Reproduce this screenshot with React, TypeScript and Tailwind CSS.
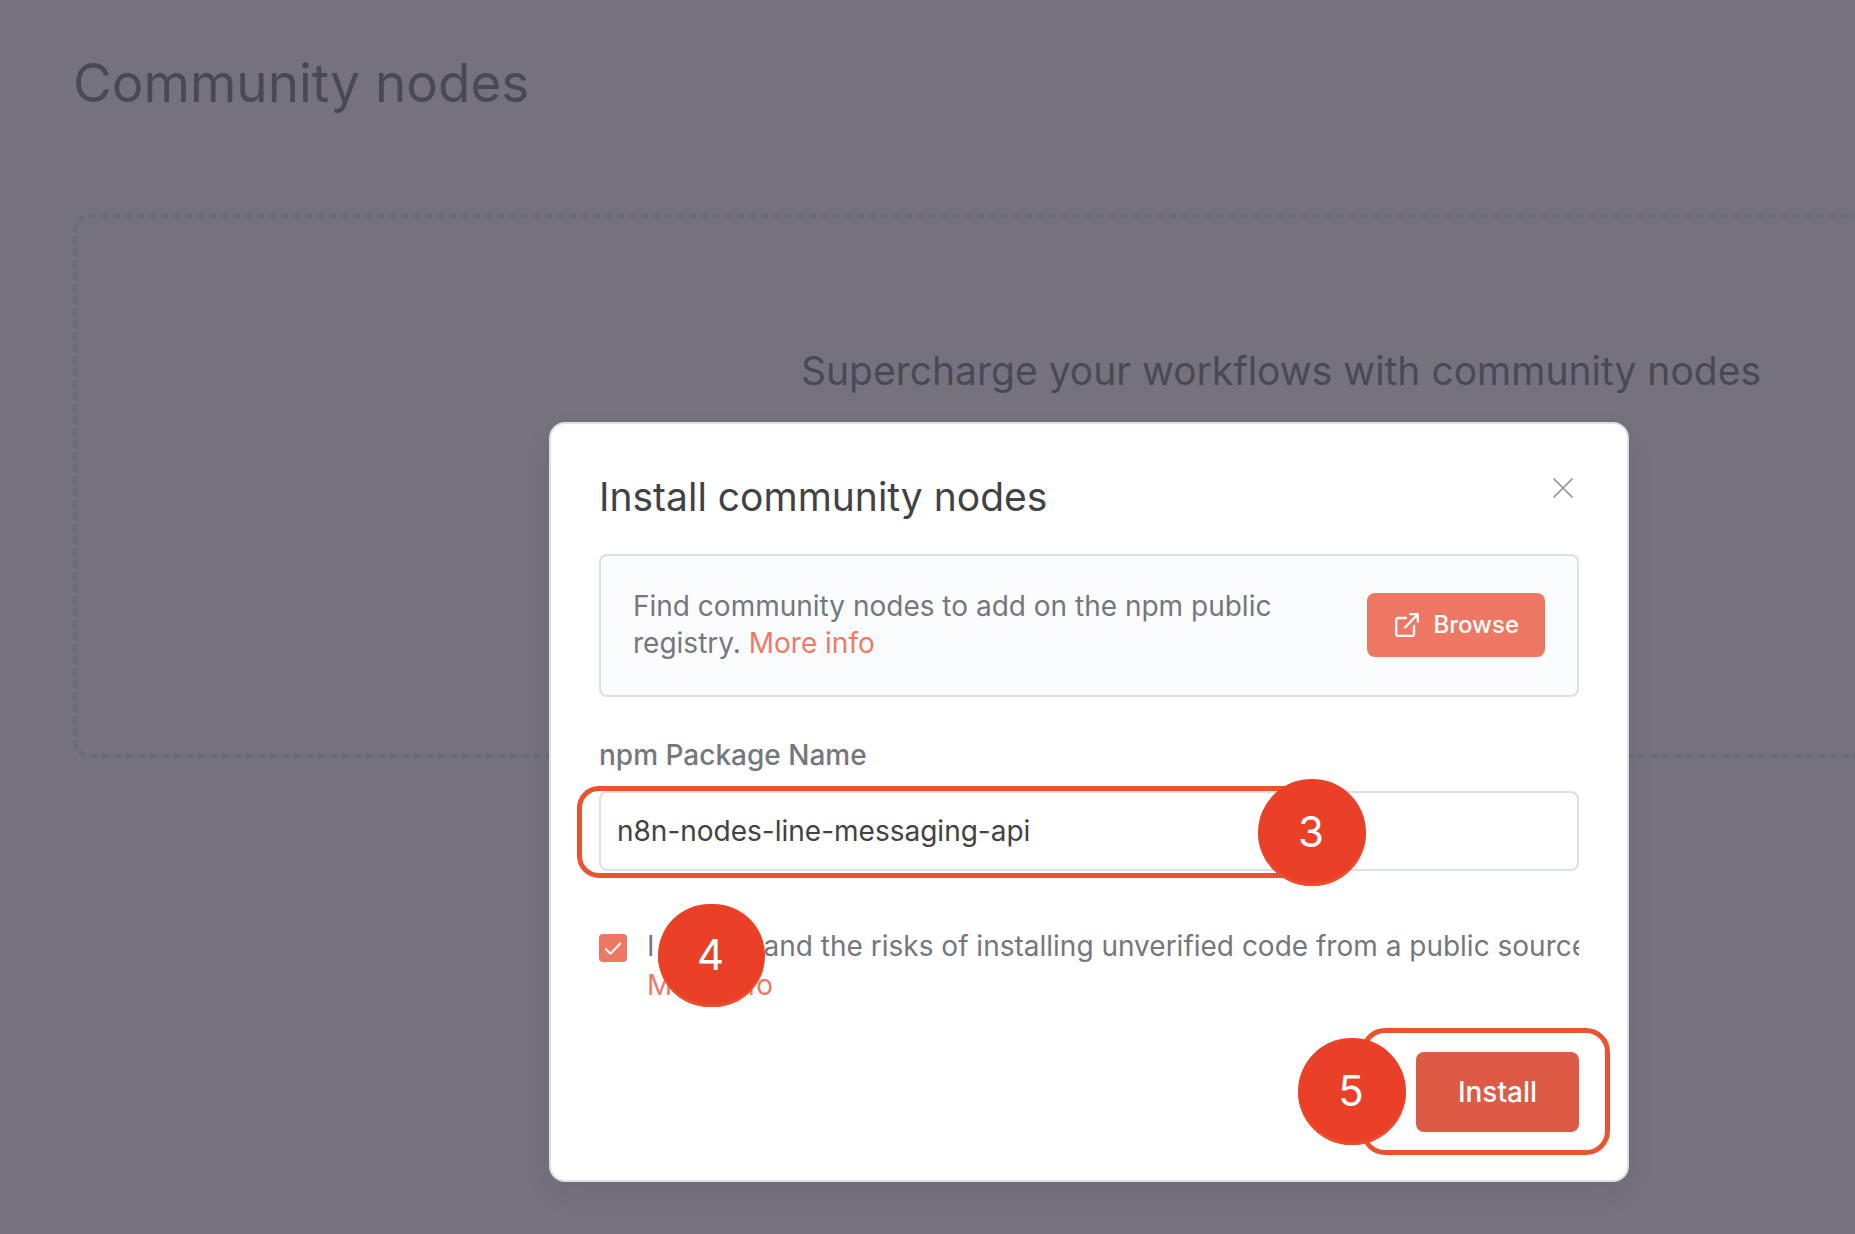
import { useState } from "react";

function StepBadge({ step, className }: { step: number; className: string }) {
  return (
    <span
      className={`pointer-events-none absolute flex items-center justify-center rounded-full bg-[#ea4027] pb-0.5 pr-0.5 text-[42px] leading-none text-white shadow-[inset_0_-3px_0_#ec4f2c] ${className}`}
    >
      {step}
    </span>
  );
}

function ExternalLinkIcon() {
  return (
    <svg
      aria-hidden="true"
      viewBox="0 0 24 24"
      className="size-6"
      fill="none"
      stroke="currentColor"
      strokeWidth="2.3"
      strokeLinecap="round"
      strokeLinejoin="round"
    >
      <path d="M15.300 1.200h7.500v7.500M22.800 1.200 10 14.500" />
      <path d="M19 12.800V21a2 2 0 0 1-2 2H3.200a2 2 0 0 1-2-2V7a2 2 0 0 1 2-2H11" />
    </svg>
  );
}

function SettingsPage() {
  return (
    <main className="h-screen overflow-hidden pl-[73px] pt-12">
      <h1 className="text-[53px] leading-[70px] text-[#494955]">Community nodes</h1>
      <section className="mt-24 flex h-[544px] w-[2416px] flex-col items-center rounded-2xl border-4 border-dashed border-[#6a6b79] pt-[128px]">
        <h2 className="text-[39px] leading-[50px] text-[#494955]">
          Supercharge your workflows with community nodes
        </h2>
      </section>
    </main>
  );
}

function InstallDialog() {
  const [name, setName] = useState("n8n-nodes-line-messaging-api");
  const [agreed, setAgreed] = useState(true);

  return (
    <div
      role="dialog"
      aria-labelledby="dialog-title"
      className="w-[1080px] rounded-2xl border-2 border-[#dbdfe7] bg-white p-12 shadow-[0_12px_32px_rgba(68,28,23,0.06)]"
    >
      <header className="flex items-start justify-between">
        <h2 id="dialog-title" className="text-[39px] leading-[50px] text-[#414244]">
          Install community nodes
        </h2>
        <button type="button" aria-label="Close" className="mr-1 mt-1 p-0.5 text-[#909298]">
          <svg viewBox="0 0 20 20" className="size-5" stroke="currentColor" strokeWidth="1.7" strokeLinecap="round">
            <path d="m1 1 18 18M19 1 1 19" />
          </svg>
        </button>
      </header>

      <div className="mt-8 flex items-center justify-between rounded-lg border-2 border-[#dbdfe7] bg-[#fbfcfe] px-8 pb-[33px] pt-8">
        <p className="w-[660px] text-[28px] leading-[37px] text-[#75777c]">
          Find community nodes to add on the npm public registry.{" "}
          <a href="#npm-info" className="text-[#ee7a66]">
            More info
          </a>
        </p>
        <button
          type="button"
          className="flex h-16 items-center gap-3.5 rounded-lg bg-[#ee7864] pl-7 pr-[26px] text-2xl font-medium text-white"
        >
          <ExternalLinkIcon />
          Browse
        </button>
      </div>

      <form onSubmit={(e) => e.preventDefault()}>
        <label htmlFor="package-name" className="mt-10 block text-[28px] font-medium leading-9 text-[#75777c]">
          npm Package Name
        </label>
        <div className="relative mt-[18px]">
          <input
            id="package-name"
            type="text"
            value={name}
            onChange={(e) => setName(e.target.value)}
            className="block h-20 w-full rounded-lg border-2 border-[#dbdfe7] bg-white px-4 text-[28px] text-[#414244] outline-none"
          />
          <div className="pointer-events-none absolute -left-[22px] -top-[5px] h-[92px] w-[740px] rounded-[22px] border-[5px] border-[#ed522e]" />
          <StepBadge step={3} className="-top-3 left-[659px] h-[107px] w-[108px]" />
        </div>

        <div className="relative mt-14">
          <div className="flex items-start gap-5 overflow-hidden">
            <span className="relative mt-[7px] size-7 shrink-0">
              <input
                id="agree"
                type="checkbox"
                checked={agreed}
                onChange={(e) => setAgreed(e.target.checked)}
                className="peer block size-7 appearance-none rounded border-2 border-[#dbdfe7] checked:border-[#ee7864] checked:bg-[#ee7864]"
              />
              <svg
                aria-hidden="true"
                viewBox="0 0 28 28"
                className="pointer-events-none absolute inset-0 hidden size-7 peer-checked:block"
                fill="none"
                stroke="white"
                strokeWidth="2"
              >
                <path d="m6.300 14.500 5.200 5.200L22 8.800" />
              </svg>
            </span>
            <div className="whitespace-nowrap text-[28px] leading-[39px] text-[#75777c]">
              <label htmlFor="agree" className="block">
                I understand the risks of installing unverified code from a public source.
              </label>
              <a href="#risk-info" className="text-[#ee7a66]">
                More info
              </a>
            </div>
          </div>
          <StepBadge step={4} className="-top-[23px] left-[59px] h-[103px] w-[107px]" />
        </div>

        <div className="mt-[47px] flex justify-end">
          <div className="relative">
            <button
              type="submit"
              className="block h-20 w-[163px] rounded-lg bg-[#dd5a45] text-[28px] font-medium text-white"
            >
              Install
            </button>
            <div className="pointer-events-none absolute -right-[31px] -top-6 h-[127px] w-[249px] rounded-[24px] border-[5px] border-[#ed522e]" />
            <StepBadge step={5} className="-left-[118px] -top-[14px] h-[107px] w-[108px]" />
          </div>
        </div>
      </form>
    </div>
  );
}

export default function App() {
  return (
    <div className="relative h-screen overflow-hidden bg-[#75727d] font-['Inter',sans-serif]">
      <SettingsPage />
      <div className="absolute inset-0 flex items-start pl-[549px] pt-[422px]">
        <InstallDialog />
      </div>
    </div>
  );
}
